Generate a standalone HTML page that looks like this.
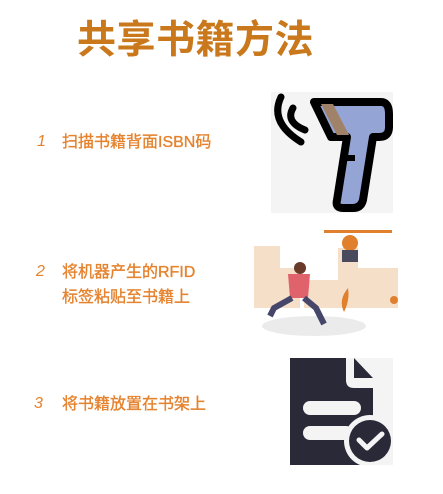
<!DOCTYPE html>
<html><head><meta charset="utf-8"><style>
body{margin:0;width:443px;height:494px;background:#fff;position:relative;overflow:hidden;font-family:"Liberation Sans","Noto Sans CJK SC",sans-serif}
.t{position:absolute;left:77px;top:9px;font-size:39px;font-weight:bold;color:#c9781c;letter-spacing:0.5px;white-space:nowrap}
.n{position:absolute;font-size:16px;font-style:italic;color:#e5822d}
.x{position:absolute;font-size:16px;color:#e5822d;line-height:25px;white-space:nowrap;-webkit-text-stroke:0.35px #e5822d}
svg{position:absolute}
</style></head><body>
<div class="t">共享书籍方法</div>
<div class="n" style="left:37px;top:133px">1</div>
<div class="x" style="left:62px;top:130px">扫描书籍背面ISBN码</div>
<div class="n" style="left:36px;top:263px">2</div>
<div class="x" style="left:62px;top:260px">将机器产生的RFID<br>标签粘贴至书籍上</div>
<div class="n" style="left:34px;top:395px">3</div>
<div class="x" style="left:62px;top:392px">将书籍放置在书架上</div>

<svg style="left:271px;top:92px" width="122" height="121" viewBox="0 0 122 121">
<rect width="122" height="121" fill="#f4f4f4"/>
<path d="M10 5 Q-2 30 30 50" fill="none" stroke="#000" stroke-width="7" stroke-linecap="round"/>
<path d="M22 16 Q14 30 34 38" fill="none" stroke="#000" stroke-width="7" stroke-linecap="round"/>
<path d="M43 10 L110 10 Q118 10 118 22 L118 35 Q118 45 108 45 L102 45 L92 108 Q90 116 82 116 L72 116 Q64 116 66 108 L76 45 L60 45 Z" fill="#94a4d4" stroke="#000" stroke-width="8" stroke-linejoin="round"/>
<path d="M50 12 L62 12 L78 43 L66 43 Z" fill="#a08268"/>
<path d="M76 66 L84 66" stroke="#000" stroke-width="6"/>
</svg>

<svg style="left:254px;top:228px" width="144" height="108" viewBox="0 0 144 108">
<rect x="0" y="18" width="26" height="62" fill="#f6dfc9"/>
<rect x="26" y="40" width="20" height="40" fill="#f6dfc9"/>
<rect x="50" y="52" width="40" height="28" fill="#f6dfc9"/>
<rect x="84" y="20" width="20" height="60" fill="#f6dfc9"/>
<rect x="100" y="40" width="44" height="40" fill="#f6dfc9"/>
<ellipse cx="60" cy="98" rx="52" ry="10" fill="#ebebeb"/>
<rect x="70" y="2" width="68" height="3" fill="#e07f2c"/>
<circle cx="96" cy="15" r="8" fill="#e07f2c"/>
<rect x="88" y="22" width="16" height="12" fill="#4a4a5e"/>
<circle cx="46" cy="40" r="6" fill="#6a3a2a"/>
<path d="M34 46 L56 46 L54 70 L36 70 Z" fill="#e0636b"/>
<path d="M38 70 L20 80 L16 88" stroke="#45466a" stroke-width="6" fill="none"/>
<path d="M50 70 L62 80 L70 96" stroke="#45466a" stroke-width="6" fill="none"/>
<path d="M90 84 Q84 72 94 60 Q96 72 90 84" fill="#e07f2c"/>
<circle cx="140" cy="72" r="4" fill="#e07f2c"/>
</svg>

<svg style="left:290px;top:358px" width="103" height="107" viewBox="0 0 103 107">
<rect width="103" height="107" fill="#f4f4f4"/>
<path d="M0 0 L56 0 L56 22 Q56 30 64 30 L83 30 L83 107 L0 107 Z" fill="#2a2938"/>
<path d="M64 0 L83 20 L64 20 Z" fill="#2a2938"/>
<rect x="13" y="43" width="58" height="14" rx="7" fill="#f4f4f4"/>
<rect x="13" y="68" width="50" height="14" rx="7" fill="#f4f4f4"/>
<circle cx="80" cy="83" r="26" fill="#f4f4f4"/>
<circle cx="80" cy="83" r="21" fill="#2a2938"/>
<path d="M69 82 L77 90 L92 76" fill="none" stroke="#f4f4f4" stroke-width="5" stroke-linecap="round" stroke-linejoin="round"/>
</svg>
</body></html>
